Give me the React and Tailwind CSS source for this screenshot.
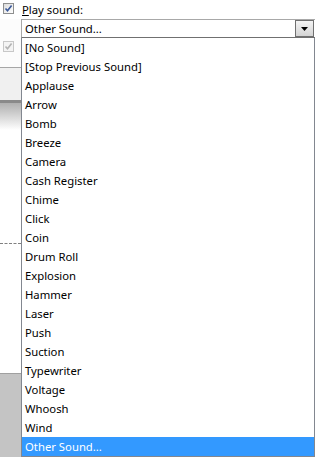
import React from "react";

const items = [
  "[No Sound]",
  "[Stop Previous Sound]",
  "Applause",
  "Arrow",
  "Bomb",
  "Breeze",
  "Camera",
  "Cash Register",
  "Chime",
  "Click",
  "Coin",
  "Drum Roll",
  "Explosion",
  "Hammer",
  "Laser",
  "Push",
  "Suction",
  "Typewriter",
  "Voltage",
  "Whoosh",
  "Wind",
];

function Check({ disabled }) {
  return (
    <div
      className={
        "w-[11px] h-[11px] border flex items-center justify-center " +
        (disabled
          ? "border-[#c8c8c8] bg-[#f4f4f4]"
          : "border-[#8e8f8f] bg-gradient-to-br from-[#dcdcdc] to-[#ffffff]")
      }
    >
      <svg width="9" height="9" viewBox="0 0 9 9">
        <path
          d="M1.5 4.5 L3.5 6.8 L7.6 1.4"
          fill="none"
          stroke={disabled ? "#b4b4b4" : "#3c5a9a"}
          strokeWidth="1.6"
        />
      </svg>
    </div>
  );
}

export default function App() {
  return (
    <div
      className="w-[315px] h-[457px] overflow-hidden bg-white flex text-[11.3px] text-black"
      style={{ fontFamily: '"Noto Sans", "Open Sans", sans-serif' }}
    >
      {/* left strip */}
      <div className="w-[21px] flex flex-col">
        <div className="h-[19px] pt-[3px] pl-[3px]">
          <Check />
        </div>
        <div className="h-[48px] pt-[22px] pl-[3px] bg-[#fcfcfc]">
          <Check disabled />
        </div>
        <div className="h-px bg-[#a6a6a6]" />
        <div className="h-[32px] bg-[#f0f0f0]" />
        <div className="h-[3px] bg-[#8a8a8a]" />
        <div className="h-[27px] bg-gradient-to-b from-[#b0b0b0] to-[#ffffff]" />
        <div className="h-[113px] bg-white" />
        <div className="h-px border-t border-dashed border-[#808080]" />
        <div className="h-[129px] bg-white" />
        <div className="h-px bg-[#a0a0a0]" />
        <div className="flex-1 bg-[#c4c4c4]" />
      </div>

      {/* right column */}
      <div className="flex-1 flex flex-col">
        <div className="h-[19px] pl-px flex items-center leading-none">
          <span>
            <span className="underline">P</span>lay sound:
          </span>
        </div>
        <div className="h-[19px] flex border-t border-b border-l border-t-[#a8a8a8] border-l-[#a8a8a8] border-b-[#707070] bg-white">
          <div className="flex-1 pl-[3px] flex items-center leading-none">
            Other Sound...
          </div>
          <div className="w-[19px] h-[17px] border border-[#707070] bg-gradient-to-b from-[#f4f4f4] to-[#d4d4d4] flex items-center justify-center">
            <svg width="7" height="4" viewBox="0 0 7 4">
              <path d="M0 0 H7 L3.5 4 Z" fill="#000" />
            </svg>
          </div>
          <div className="w-px" />
        </div>
        <div className="flex-1 flex flex-col border-l border-r border-b border-[#828790] bg-white">
          {items.map((t) => (
            <div key={t} className="h-[19px] pl-[3px] flex items-center leading-none">
              {t}
            </div>
          ))}
          <div className="h-[19px] pl-[3px] flex items-center leading-none bg-[#3399ff] text-white">
            Other Sound...
          </div>
        </div>
      </div>
    </div>
  );
}
